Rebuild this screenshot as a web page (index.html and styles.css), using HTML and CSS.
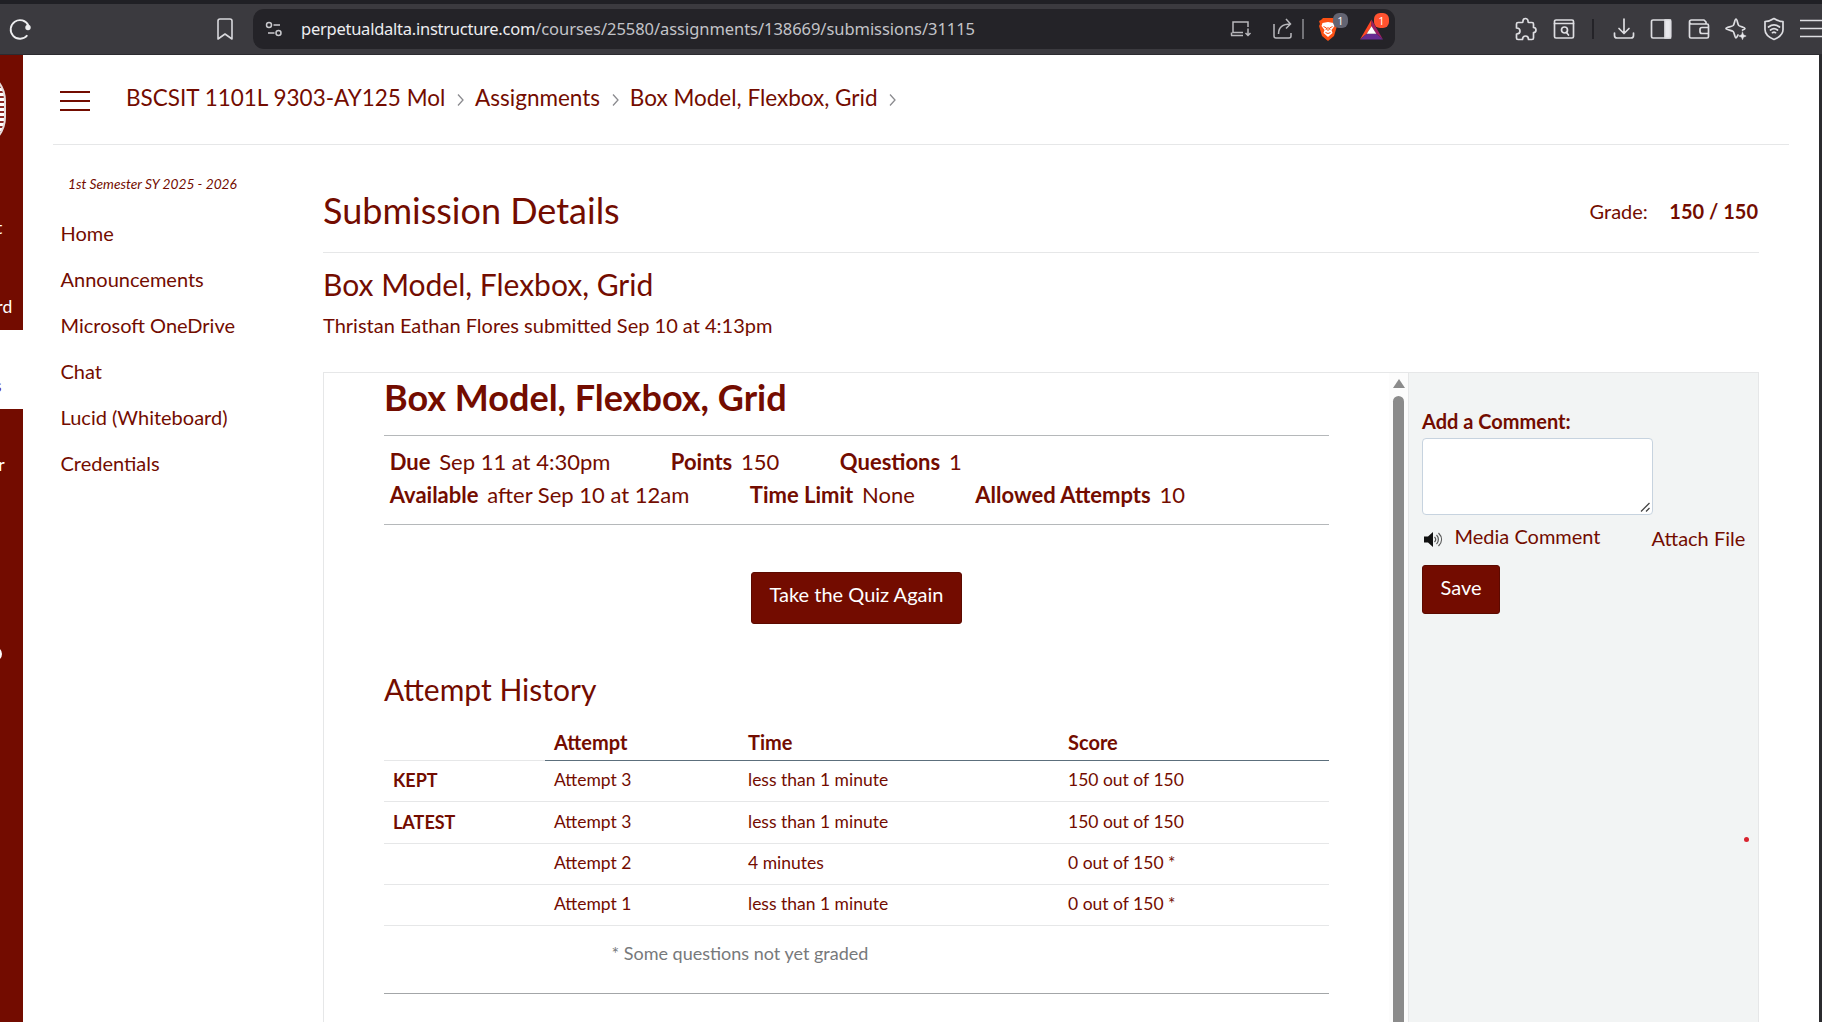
FILE: index.html
```html
<!DOCTYPE html>
<html lang="en">
<head>
<meta charset="utf-8">
<title>Submission Details</title>
<link rel="stylesheet" href="styles.css">
</head>
<body>
<header class="browser">
  <svg class="reload" width="24" height="24" viewBox="0 0 24 24" fill="none" stroke="#eeeef0" stroke-width="1.8"><path d="M19.300 18.200A9.300 9.300 0 1 1 20.400 8.500"/><circle cx="20" cy="10.500" r="2.700" fill="#eeeef0" stroke="none"/></svg>
  <svg class="bookmark" width="18" height="24" viewBox="0 0 18 24" fill="none" stroke="#d8d8dc" stroke-width="1.600"><path d="M2 4a2 2 0 0 1 2-2h10a2 2 0 0 1 2 2v18l-7-5-7 5z" stroke-linejoin="round"/></svg>
  <div class="address">
    <svg class="tune" width="18" height="16" viewBox="0 0 18 16" fill="none" stroke="#c9c9cd" stroke-width="1.500"><circle cx="4" cy="4" r="2.500"/><path d="M8.500 4H15M3 12h6.500"/><circle cx="13.500" cy="12" r="2.500"/></svg>
    <span class="url"><span class="host">perpetualdalta.instructure.com</span>/courses/25580/assignments/138669/submissions/31115</span>
    <svg class="install" width="22" height="18" viewBox="0 0 22 18" fill="none" stroke="#b8b8bc" stroke-width="1.500"><path d="M18 7V2H3v10.500h10M1 15.500h12M1.500 12.500v3M18 8.500v7M15.500 13l2.500 2.500 2.500-2.500"/></svg>
    <svg class="share" width="22" height="22" viewBox="0 0 22 22" fill="none" stroke="#b8b8bc" stroke-width="1.500"><path d="M2 6v12a2 2 0 0 0 2 2h13a2 2 0 0 0 2-2v-3M6.500 16c0-6 4-10 12-10M14 1l4.500 5L14 10.500"/></svg>
    <i class="divider"></i>
    <span class="badged"><svg width="20" height="24" viewBox="0 0 20 24"><path d="M5 1h10l2 2 2 1-1 3 1 2-3 10-6 5-6-5L1 9l1-2-1-3 2-1z" fill="#fb5013"/><path d="M4.500 6 10 5l5.500 1 1 3-3 4 1 3-4.500 4-4.500-4 1-3-3-4z" fill="#fff"/><path d="M5.500 9.500 8.500 11l-.5 2M14.500 9.500l-3 1.500.5 2M10 10v4M7.500 15.500l2.500 1 2.500-1" stroke="#fb5013" fill="none"/></svg><em class="badge">1</em></span>
    <span class="badged bat"><svg width="23" height="21" viewBox="0 0 24 21"><path d="M12 0v7l-5 8-7 6z" fill="#ff4724"/><path d="M12 0 24 21l-7-6-5-8z" fill="#9e1f63"/><path d="M0 21h24l-7-6H7z" fill="#662d91"/><path d="m12 7 5 8H7z" fill="#fff"/></svg><em class="badge red">1</em></span>
  </div>
  <div class="tools">
    <svg width="22" height="24" viewBox="0 0 22 24"><path d="M3 5.500h4.500c.5 0 .5-.5.500-1.500a2.500 2.500 0 0 1 5 0c0 1 0 1.500.5 1.500H17a1.500 1.500 0 0 1 1.500 1.500v3.500c1.500 0 2.500 1 2.500 2.500s-1 2.500-2.500 2.500V21a1.500 1.500 0 0 1-1.500 1.500h-3.500c0-2-1-3.500-3-3.500s-3 1.500-3 3.500H3A1.500 1.500 0 0 1 1.500 21v-4C3.500 17 5 16 5 14s-1.500-3-3.500-3V7A1.500 1.500 0 0 1 3 5.500z"/></svg>
    <svg width="22" height="22" viewBox="0 0 22 22"><rect x="1.500" y="2" width="19" height="18" rx="1.500"/><path d="M1.500 5.500h19M13.500 14.500l2 2.500"/><circle cx="11.500" cy="12" r="3"/></svg>
    <i class="bar"></i>
    <svg width="22" height="22" viewBox="0 0 22 22"><path d="M11 1v14M6 10.500l5 5 5-5M1.500 15v2.500a2.500 2.500 0 0 0 2.500 2.500h14a2.500 2.500 0 0 0 2.500-2.500V15"/></svg>
    <svg width="22" height="22" viewBox="0 0 22 22"><rect x="1.500" y="2" width="19" height="18" rx="1.500"/><path d="M15 2h5.500v18H15z" fill="#e9e9ed"/></svg>
    <svg width="22" height="22" viewBox="0 0 22 22"><path d="M1.500 4v14.500A1.500 1.500 0 0 0 3 20h16a1.500 1.500 0 0 0 1.500-1.500v-11A1.500 1.500 0 0 0 19 6H3.500a2 2 0 0 1 0-4H16l2 2v2M20.500 9.500H14a2 2 0 0 0-2 2v2a2 2 0 0 0 2 2h6.500"/></svg>
    <svg width="22" height="22" viewBox="0 0 22 22"><path d="M13 17c-.7 1.500-1.200 2.800-2 2.800-1.300 0-1.500-4.800-2.800-6.300C6.800 12.200 1 11.800 1 10.500s5.800-1.700 7.200-3C9.500 6 9.700 1.200 11 1.200s1.500 4.800 2.800 6.300c1.400 1.300 6.200 1.700 6.200 3 0 .8-1.300 1.200-2.500 1.600"/><path d="m17.500 14 1 2.800 2.700 1.200-2.700 1.200-1 2.500-1-2.500-2.700-1.200 2.700-1.200z" fill="#e9e9ed" stroke-width=".5"/></svg>
    <svg width="22" height="24" viewBox="0 0 22 24"><path d="M11 1.500c3 2 6 3 9 3v8c0 4-3 7.500-9 10-6-2.500-9-6-9-10v-8c3 0 6-1 9-3z"/><path d="M5.500 10c3.500-2.700 7.500-2.700 11 0M7.500 13c2.200-1.700 4.800-1.700 7 0M9.500 15.700c1-.7 2-.7 3 0"/></svg>
    <svg width="22" height="22" viewBox="0 0 22 22"><path d="M0 2.500h22M0 10.500h22M0 18.500h22"/></svg>
  </div>
</header>
<div class="page">
  <nav class="rail">
    <div class="rail-inner">
      <div class="logo"><span></span></div>
      <a>Account</a>
      <a>Dashboard</a>
      <a class="active">Courses</a>
      <a>Calendar</a>
      <a class="inbox"><i></i></a>
    </div>
  </nav>
  <div class="content">
    <div class="crumbs">
      <svg class="menu" width="30" height="22" viewBox="0 0 30 22" stroke="#730c00" stroke-width="2"><path d="M0 2h30M0 11h30M0 20h30"/></svg>
      <a>BSCSIT 1101L 9303-AY125 Mol</a>
      <svg class="chev" width="7" height="14" viewBox="0 0 7 14"><path d="m1 1.500 5 5.500-5 5.500"/></svg>
      <a>Assignments</a>
      <svg class="chev" width="7" height="14" viewBox="0 0 7 14"><path d="m1 1.500 5 5.500-5 5.500"/></svg>
      <a>Box Model, Flexbox, Grid</a>
      <svg class="chev" width="7" height="14" viewBox="0 0 7 14"><path d="m1 1.500 5 5.500-5 5.500"/></svg>
    </div>
    <div class="columns">
      <aside class="course-nav">
        <p>1st Semester SY 2025 - 2026</p>
        <a>Home</a>
        <a>Announcements</a>
        <a>Microsoft OneDrive</a>
        <a>Chat</a>
        <a>Lucid (Whiteboard)</a>
        <a>Credentials</a>
      </aside>
      <main class="details">
        <div class="title-row">
          <h1>Submission Details</h1>
          <div class="grade">Grade: <b>150 / 150</b></div>
        </div>
        <h2>Box Model, Flexbox, Grid</h2>
        <p class="submitted">Thristan Eathan Flores submitted Sep 10 at 4:13pm</p>
        <div class="frame">
          <section class="quiz">
            <h1 class="quiz-title">Box Model, Flexbox, Grid</h1>
            <div class="facts">
              <div class="fact-row"><span><b>Due</b>Sep 11 at 4:30pm</span><span><b>Points</b>150</span><span><b>Questions</b>1</span></div>
              <div class="fact-row"><span><b>Available</b>after Sep 10 at 12am</span><span><b>Time Limit</b>None</span><span><b>Allowed Attempts</b>10</span></div>
            </div>
            <div class="retake"><a class="btn">Take the Quiz Again</a></div>
            <h2 class="history-title">Attempt History</h2>
            <table>
              <colgroup><col class="c1"><col class="c2"><col class="c3"><col></colgroup>
              <thead><tr><td></td><th>Attempt</th><th>Time</th><th>Score</th></tr></thead>
              <tbody>
                <tr><th>KEPT</th><td>Attempt 3</td><td>less than 1 minute</td><td>150 out of 150</td></tr>
                <tr><th>LATEST</th><td>Attempt 3</td><td>less than 1 minute</td><td>150 out of 150</td></tr>
                <tr><th></th><td>Attempt 2</td><td>4 minutes</td><td>0 out of 150 *</td></tr>
                <tr><th></th><td>Attempt 1</td><td>less than 1 minute</td><td>0 out of 150 *</td></tr>
              </tbody>
            </table>
            <p class="note">* Some questions not yet graded</p>
          </section>
          <div class="scroll"><i class="up"></i><i class="thumb"></i></div>
          <aside class="comment">
            <label>Add a Comment:</label>
            <div class="box"><svg width="10" height="10" viewBox="0 0 10 10" stroke="#444" stroke-width="1.300"><path d="M1 9.500 9.500 1M6 9.500 9.500 6"/></svg></div>
            <div class="actions">
              <svg width="19" height="17" viewBox="0 0 19 17"><path d="M0 5.500h4L9 1v15l-5-4.500H0z" fill="#111"/><path d="M10.500 6c1.500 1.500 1.500 3.500 0 5M12.500 4c2.500 2.500 2.500 6.500 0 9M14.500 2c4 4 4 9 0 13" fill="none" stroke="#555" stroke-width="1.200"/></svg>
              <a>Media Comment</a><a class="attach">Attach File</a>
            </div>
            <a class="btn save">Save</a>
            <i class="dot"></i>
          </aside>
        </div>
      </main>
    </div>
  </div>
</div>
</body>
</html>
```
FILE: styles.css
```css
*{box-sizing:border-box}
body{margin:0;width:1822px;height:1022px;overflow:hidden;background:#fff;font:20px/24px Lato,sans-serif;color:#730c00}
h1,h2,p{margin:0;font-weight:400}
svg{display:block;flex:none}

.browser{height:55px;background:#3b3a3f;border-top:4px solid #202025;border-bottom:1px solid #2c2b30;display:flex;align-items:center;padding-left:8px}
.bookmark{margin-left:184px}
.address{margin-left:19px;width:1142px;height:40px;border-radius:11px;background:#242328;display:flex;align-items:center;padding-left:12px;flex:none}
.url{margin-left:18px;width:929px;font:16.500px/26px "Noto Sans","Open Sans",sans-serif;letter-spacing:-.05px;color:#c3c3c8;white-space:nowrap}
.host{color:#ededf0;letter-spacing:-.25px}
.share{margin-left:20px}
.divider{margin-left:8px;width:2px;height:20px;background:#737378}
.badged{position:relative;margin-left:14px}
.bat{margin-left:22px}
.badge{position:absolute;left:15px;top:-4px;width:15px;height:15px;border-radius:6px;background:#636472;color:#fff;font:11px/15px "Open Sans",sans-serif;text-align:center}
.badge.red{left:14px;top:-6px;background:#ff5230}
.tools{margin-left:120px;display:flex;align-items:center;gap:15.500px}
.tools svg{fill:none;stroke:#dddde1;stroke-width:1.700;stroke-linejoin:round;stroke-linecap:round}
.bar{width:7px;height:20px;border-left:2px solid #242328;margin-left:2px;margin-right:-2px}

.page{height:967px;display:flex;border-right:3px solid #2b2b2e}
.rail{width:23px;flex:none;overflow:hidden;background:#730c00}
.rail-inner{width:105px;margin-left:-82px;text-align:center;font-size:17.500px;color:#fff}
.rail-inner a{display:flex;flex-direction:column;justify-content:flex-end;height:79px;padding-bottom:11px}
.rail-inner a.active{background:#fff;color:#5a1a8c}
.rail-inner .inbox{height:184px;align-items:center}
.inbox i{width:20px;height:14px;margin-left:42px;border:2px solid #fff;border-radius:7px}
.logo{height:117px;padding-top:14px}
.logo span{display:block;width:70px;height:80px;margin:0 auto;border:2px solid #e6dcdb;border-radius:32px;background:repeating-linear-gradient(#8c2c28 0 2px,#fff 2px 5px)}

.content{flex:1;padding-left:30px}
.crumbs{height:90px;width:1736px;border-bottom:1px solid #e6e7e8;display:flex;align-items:center;font-size:22.500px;line-height:30px;padding:0 0 3px 7px}
.menu{margin-top:5px;margin-right:36px}
.chev{margin:4px 11.300px 0 11.500px;fill:none;stroke:#8b8b8f;stroke-width:1.300}
.columns{display:flex}
.course-nav{width:270px;padding:29px 0 0 7.500px;flex:none}
.course-nav p{font-size:13.750px;line-height:20px;font-style:italic;margin:0 0 16px 7.500px}
.course-nav a{display:block;line-height:46px;font-size:20px}

.details{width:1436px;padding-top:43px}
.title-row{display:flex;justify-content:space-between;height:65px;border-bottom:1px solid #e6e7e8;margin-bottom:13px}
.title-row h1{font-size:36px;line-height:44px}
.grade{margin:11px 1px 0 0;display:flex;gap:21.500px}
.details h2{font-size:30px;line-height:36px}
.submitted{margin-top:11px}
.frame{margin-top:35px;height:650px;border:1px solid #e6e7e8;border-bottom:0;display:flex}
.quiz{width:1065px;padding:2px 60px 0}
.quiz-title{font-size:36px;line-height:44px;font-weight:700}
.facts{margin-top:16px;height:90px;border-top:1px solid #b5b8ba;border-bottom:1px solid #b5b8ba;padding:9px 5.700px 0;font-size:22px;line-height:33px}
.fact-row{display:flex;gap:60.500px}
.fact-row b{margin-right:8.800px}
.retake{margin-top:47px;display:flex;justify-content:center}
.btn{display:block;height:52px;padding:6px 17.500px;border-radius:3px;background:#730c00;border:1px solid #5c0a00;color:#fff;line-height:30px}
.history-title{margin-top:47px}
table{width:945px;margin-top:16px;border-collapse:separate;border-spacing:0;table-layout:fixed;font-size:17.500px}
.c1{width:161px}
.c2{width:194px}
.c3{width:320px}
th,td{padding:7px 9px 8.300px;text-align:left;height:41.250px;border-bottom:1px solid #e6e7e8;line-height:24px}
th{font-size:18px}
thead th,thead td{height:38px;padding-bottom:6px}
thead th{font-size:20px;border-bottom-color:#5c6f7c}
.note{height:68px;padding:15px 0 0 227.500px;border-bottom:1px solid #a3a6a8;color:#77797b;font-size:18px}
.scroll{width:19px;background:#fcfcfc;display:flex;flex-direction:column;align-items:center}
.up{margin-top:6px;width:0;border:6px solid transparent;border-top:0;border-bottom:9px solid #8b8b8b}
.thumb{margin-top:8px;width:11px;flex:1;border-radius:6px 6px 0 0;background:#8b8b8b}
.comment{position:relative;flex:1;background:#f2f4f4;border-left:1px solid #e6e7e8;padding:36px 0 0 13px}
.comment label{display:block;font-weight:700}
.box{margin-top:5px;width:231px;height:77px;border:1px solid #c7d3df;border-radius:4px;background:#fff;display:flex;justify-content:flex-end;align-items:flex-end;padding:2px}
.actions{display:flex;margin:9px 0 15px 2px}
.actions svg{margin:7px 11.500px 0 0}
.attach{margin:2px 0 0 51px}
.save{display:inline-block;height:49px;width:78px}
.dot{position:absolute;left:335px;top:464px;width:5px;height:5px;border-radius:50%;background:#d9232e}
```
